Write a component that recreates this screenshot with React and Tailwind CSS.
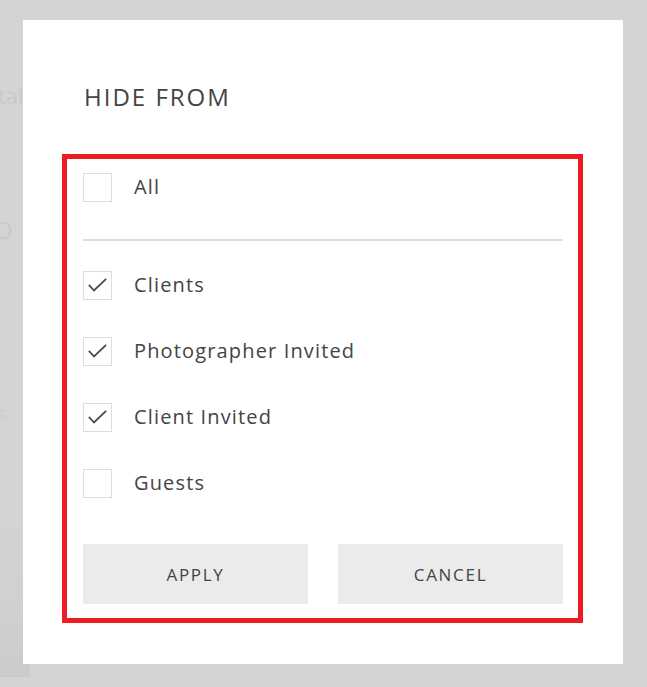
import React from "react";

const font = { fontFamily: '"Open Sans", "Noto Sans", sans-serif' };

function Check() {
  return (
    <svg width="29" height="29" viewBox="0 0 29 29" className="block">
      <path d="M6.5 14.5 L11 19.5 L22.5 8.5" fill="none" stroke="#4a4a4a" strokeWidth="1.8" strokeLinecap="square" strokeLinejoin="miter" />
    </svg>
  );
}

function Row({ label, checked }) {
  return (
    <div className="flex items-center h-[29px]">
      <div className="w-[29px] h-[29px] border border-[#dddddd] bg-white shrink-0 box-border relative">
        {checked && (
          <div className="absolute -left-px -top-px">
            <Check />
          </div>
        )}
      </div>
      <span className="ml-[22px] pb-[2px] text-[20px] tracking-[1.15px] text-[#444444] leading-none">{label}</span>
    </div>
  );
}

export default function App() {
  return (
    <div className="relative w-[647px] h-[687px] bg-[#d4d4d4] overflow-hidden" style={font}>
      {/* faint page content under the overlay */}
      <div className="absolute left-[-2px] top-[84px] text-[22px] text-[#cacaca] leading-none">tal</div>
      <div className="absolute left-[-6px] top-[218px] text-[24px] text-[#c9c9c9] leading-none">O</div>
      <div className="absolute left-[-3px] top-[404px] text-[17px] text-[#cbcbcb] leading-none">s</div>
      <div className="absolute left-0 top-[527px] w-[30px] h-[150px] bg-gradient-to-b from-[#d2d3d3] via-[#d1d1cf] to-[#cbcbca]" />

      {/* modal */}
      <div className="absolute left-[23px] top-[20px] w-[600px] h-[644px] bg-white pl-[39px] pr-[40px] pt-[65px]">
        <h2 className="ml-[22px] text-[24px] leading-none tracking-[2px] text-[#444444] font-normal">HIDE FROM</h2>
        <div className="mt-[45px] border-[5px] border-[#ed1c24] pl-[16px] pr-[15px] pt-[14px] pb-[14px]">
          <Row label="All" checked={false} />
          <div className="mt-[37px] h-[2px] bg-[#dddddd]" />
          <div className="mt-[30px] flex flex-col gap-[37px]">
            <Row label="Clients" checked />
            <Row label="Photographer Invited" checked />
            <Row label="Client Invited" checked />
            <Row label="Guests" checked={false} />
          </div>
          <div className="mt-[46px] flex gap-[30px]">
            <button className="flex-1 h-[60px] bg-[#ebebeb] text-[17px] tracking-[1.7px] text-[#444444] leading-none">APPLY</button>
            <button className="flex-1 h-[60px] bg-[#ebebeb] text-[17px] tracking-[1.7px] text-[#444444] leading-none">CANCEL</button>
          </div>
        </div>
      </div>
    </div>
  );
}
